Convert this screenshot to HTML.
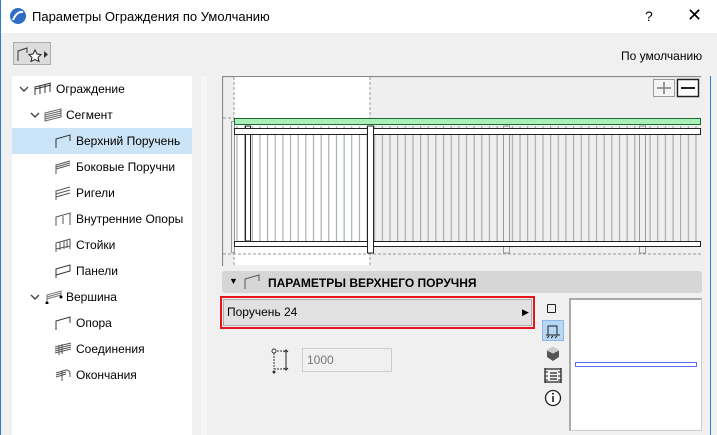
<!DOCTYPE html>
<html><head><meta charset="utf-8"><style>
*{margin:0;padding:0;box-sizing:border-box}
body{width:717px;height:435px;overflow:hidden;background:#f0f0f0;font-family:"Liberation Sans",sans-serif;font-size:12px;color:#000;position:relative;border-left:1px solid #2b7bd3}
.a{position:absolute}
.tree div.r{position:absolute;left:0;width:180px;height:26px;line-height:26px;font-size:12px}
.sel{background:#cce4f7}
svg{display:block}
</style></head><body>
<div class="a" style="left:0;top:0;width:717px;height:33px;background:#fff"></div>
<svg class="a" style="left:8px;top:7px" width="18" height="18"><circle cx="9" cy="9" r="8" fill="#2f6fc3"/><path d="M4 13 Q8 4 14 5" stroke="#fff" stroke-width="2" fill="none"/></svg>
<div class="a" style="left:31px;top:9px;font-size:13px">Параметры Ограждения по Умолчанию</div>
<div class="a" style="left:644px;top:8px;font-size:14px">?</div>
<div class="a" style="left:686px;top:5px;font-size:18px">✕</div>

<div class="a" style="left:12px;top:42px;width:38px;height:23px;background:#dcdcdc;border:1px solid #adadad"></div>
<svg class="a" style="left:14px;top:44px" width="36" height="20"><path d="M3 17V7l9-3v5" stroke="#333" fill="none"/><path d="M20 6l2 4 4 .5-3 3 1 4-4-2-4 2 1-4-3-3 4-.5z" stroke="#222" fill="#fff"/><path d="M29 7l4 3.5-4 3.5z" fill="#333"/></svg>
<div class="a" style="left:620px;top:49px">По умолчанию</div>

<div class="a tree" style="left:11px;top:76px;width:180px;height:359px;background:#fff">
<div class="r" style="top:0"><svg class="a" style="left:7px;top:10px" width="10" height="7"><path d="M1 1l4 4 4-4" stroke="#444" stroke-width="1.4" fill="none"/></svg><svg class="a" style="left:22px;top:6px" width="18" height="14"><path d="M1 13V5l16-4M6 12V4M11 11V3M16 10V2M1 7l16-4" stroke="#333" fill="none"/></svg><span class="a" style="left:44px">Ограждение</span></div>
<div class="r" style="top:26px"><svg class="a" style="left:18px;top:10px" width="10" height="7"><path d="M1 1l4 4 4-4" stroke="#444" stroke-width="1.4" fill="none"/></svg><svg class="a" style="left:32px;top:6px" width="18" height="14"><path d="M1 5l16-4v8L1 13z M1 7l16-4M1 9l16-4M1 11l16-4" stroke="#666" fill="none"/></svg><span class="a" style="left:54px">Сегмент</span></div>
<div class="r sel" style="top:52px"><svg class="a" style="left:42px;top:6px" width="18" height="14"><path d="M2 14V5l14-4v6" stroke="#333" fill="none"/></svg><span class="a" style="left:64px">Верхний Поручень</span></div>
<div class="r" style="top:78px"><svg class="a" style="left:42px;top:6px" width="18" height="14"><path d="M2 14V5l14-4M2 7l14-4M2 9l14-4" stroke="#555" fill="none"/></svg><span class="a" style="left:64px">Боковые Поручни</span></div>
<div class="r" style="top:104px"><svg class="a" style="left:42px;top:6px" width="18" height="14"><path d="M2 14V5l14-4M2 8l14-4M2 11l14-4" stroke="#555" fill="none"/></svg><span class="a" style="left:64px">Ригели</span></div>
<div class="r" style="top:130px"><svg class="a" style="left:42px;top:6px" width="18" height="14"><path d="M2 14V5l14-4v12M9 12V4" stroke="#555" fill="none"/></svg><span class="a" style="left:64px">Внутренние Опоры</span></div>
<div class="r" style="top:156px"><svg class="a" style="left:42px;top:6px" width="18" height="14"><path d="M2 14V5l14-4v10M2 11l14-3M6 12V4M10 11V3M13 10V2" stroke="#555" fill="none"/></svg><span class="a" style="left:64px">Стойки</span></div>
<div class="r" style="top:182px"><svg class="a" style="left:42px;top:6px" width="18" height="14"><path d="M2 14V5l14-4v6L2 11" stroke="#333" fill="none"/></svg><span class="a" style="left:64px">Панели</span></div>
<div class="r" style="top:208px"><svg class="a" style="left:18px;top:10px" width="10" height="7"><path d="M1 1l4 4 4-4" stroke="#444" stroke-width="1.4" fill="none"/></svg><svg class="a" style="left:32px;top:6px" width="20" height="14"><path d="M3 13V5l14-4v5M3 7l14-4M3 9l14-4" stroke="#777" fill="none"/><circle cx="3" cy="13" r="1.5"/><circle cx="17" cy="7" r="1.5"/></svg><span class="a" style="left:54px">Вершина</span></div>
<div class="r" style="top:234px"><svg class="a" style="left:42px;top:6px" width="18" height="14"><path d="M2 14V5l14-4v6" stroke="#333" fill="none"/></svg><span class="a" style="left:64px">Опора</span></div>
<div class="r" style="top:260px"><svg class="a" style="left:42px;top:6px" width="18" height="14"><path d="M1 5l16-4M1 7l16-4M1 9l16-4M1 11l16-4M5 13V3M8 12V2" stroke="#555" fill="none"/></svg><span class="a" style="left:64px">Соединения</span></div>
<div class="r" style="top:286px"><svg class="a" style="left:42px;top:6px" width="18" height="14"><path d="M2 5l10-3q4 0 4 4v3M2 7l10-3M2 9l10-3M8 13V3" stroke="#555" fill="none"/></svg><span class="a" style="left:64px">Окончания</span></div>
</div>

<div class="a" style="left:200px;top:76px;width:6px;height:359px;background:#f7f7f7"></div>
<div class="a" style="left:709px;top:76px;width:1px;height:359px;background:#2b7bd3"></div>

<svg class="a" style="left:221px;top:76px" width="480" height="190">
<defs><pattern id="b" width="7.65" height="200" patternUnits="userSpaceOnUse" x="12"><line x1="3" y1="0" x2="3" y2="200" stroke="#98a0a4" stroke-width="1"/></pattern></defs>
<rect x="0" y="0" width="480" height="190" fill="#efefef"/>
<path d="M.5 190V.5H479" stroke="#888" fill="none" stroke-width="1.2"/>
<rect x="12" y="1" width="136" height="188" fill="#fff"/>
<line x1="148" y1="1" x2="148" y2="189" stroke="#999" stroke-dasharray="3,2"/>
<line x1="12" y1="1" x2="12" y2="189" stroke="#999" stroke-dasharray="3,2"/>
<line x1="1" y1="42" x2="12" y2="42" stroke="#999" stroke-dasharray="3,2"/>
<line x1="1" y1="178" x2="479" y2="178" stroke="#999" stroke-dasharray="3,2"/>
<rect x="12" y="50" width="466" height="115" fill="url(#b)"/>
<rect x="9.5" y="45.5" width="3" height="131" fill="#eee" stroke="#999"/>
<rect x="23.5" y="50" width="5" height="115" fill="#fff" stroke="#222"/>
<rect x="281.5" y="50" width="6" height="127" fill="#efefef" stroke="#999"/>
<rect x="417.5" y="50" width="6" height="127" fill="#efefef" stroke="#999"/>
<rect x="12.5" y="42.5" width="466" height="6" fill="#a9f0b8" stroke="#1b6a30"/>
<rect x="12.5" y="52.5" width="466" height="6" fill="#fff" stroke="#222"/>
<rect x="12.5" y="165.5" width="466" height="5" fill="#fff" stroke="#222"/>
<rect x="145.5" y="50" width="6" height="127" fill="#fff" stroke="#222"/>
<rect x="431.5" y="3.5" width="21" height="17" fill="#f5f5f5" stroke="#999"/>
<path d="M442 6v12M435 12h14" stroke="#999" stroke-width="2"/>
<rect x="455.5" y="3.5" width="21" height="17" fill="#fff" stroke="#222" stroke-width="1.5"/>
<path d="M459 12h14" stroke="#222" stroke-width="2"/>
</svg>

<div class="a" style="left:221px;top:271px;width:480px;height:22px;background:#d6d6d6;border-radius:3px"></div>
<div class="a" style="left:228px;top:276px;font-size:9px">▼</div>
<svg class="a" style="left:242px;top:273px" width="18" height="16"><path d="M2 16V6l14-4v6" stroke="#555" fill="none"/></svg>
<div class="a" style="left:267px;top:276px;font-weight:bold;font-size:12px">ПАРАМЕТРЫ ВЕРХНЕГО ПОРУЧНЯ</div>

<div class="a" style="left:219px;top:296px;width:315px;height:33px;border:2px solid #e8141c"></div>
<div class="a" style="left:222px;top:299px;width:309px;height:27px;background:#e1e1e1;border:1px solid #adadad"></div>
<div class="a" style="left:226px;top:305px;font-size:12px">Поручень 24</div>
<div class="a" style="left:521px;top:307px;font-size:9px">▶</div>

<svg class="a" style="left:268px;top:347px" width="24" height="30"><circle cx="5" cy="4" r="2" fill="#fff" stroke="#333"/><path d="M5 6v16M5 22h10M8 4h7" stroke="#333" stroke-dasharray="2,1" fill="none"/><path d="M17 3v20M15 5l2-2 2 2M15 21l2 2 2-2" stroke="#222" fill="none"/><circle cx="5" cy="25" r="1.5" fill="#333"/></svg>
<div class="a" style="left:301px;top:348px;width:90px;height:24px;border:1px solid #ccc;background:#f0f0f0;color:#777;padding:4px 4px;font-size:12px">1000</div>

<div class="a" style="left:546px;top:304px;width:9px;height:9px;border:1.2px solid #222;border-radius:1px"></div>
<div class="a" style="left:541px;top:320px;width:22px;height:21px;background:#b8d7f3;border:1px solid #8ab8e8"></div>
<svg class="a" style="left:543px;top:322px" width="18" height="18"><path d="M4 13V4h9v9M2 13h14" stroke="#222" fill="none"/><path d="M3 16l2-2M7 16l2-2M11 16l2-2" stroke="#222"/></svg>
<svg class="a" style="left:544px;top:346px" width="16" height="16"><path d="M8 1l6 3v7l-6 4-6-4V4z" fill="#555"/><path d="M2 4l6 3 6-3" stroke="#ddd" fill="none"/><path d="M8 1l6 3-6 3-6-3z" fill="#ccc"/></svg>
<svg class="a" style="left:543px;top:367px" width="18" height="17"><path d="M1 1v15M17 1v15M1 2h16M1 15h16M6 6h7M6 9h7M6 12h7" stroke="#222" stroke-width="1.3" fill="none"/><path d="M1 5h3M1 9h3M1 13h3M14 5h3M14 9h3M14 13h3" stroke="#222"/></svg>
<svg class="a" style="left:543px;top:389px" width="18" height="18"><circle cx="9" cy="9" r="7.5" fill="#fff" stroke="#222" stroke-width="1.3"/><path d="M9 7v6" stroke="#222" stroke-width="1.6"/><circle cx="9" cy="4.8" r="1" fill="#222"/></svg>

<div class="a" style="left:568px;top:298px;width:133px;height:133px;background:#fff;border:1px solid #ccc;border-top:2px solid #aaa;border-left:2px solid #aaa"></div>
<div class="a" style="left:574px;top:362px;width:122px;height:5px;border:1px solid #5b6ef0"></div>
</body></html>
